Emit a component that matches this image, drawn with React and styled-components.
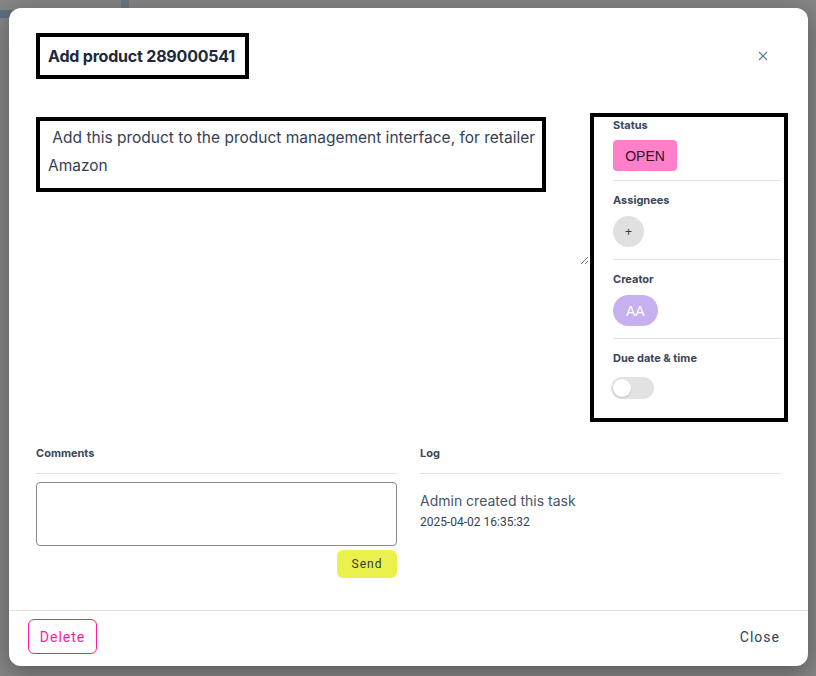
import styled, { createGlobalStyle } from 'styled-components'

const GlobalStyle = createGlobalStyle`
  * { box-sizing: border-box; }
  body {
    margin: 0;
    background: #858585;
    font-family: Inter, "Noto Sans", sans-serif;
  }
`

const Page = styled.div`
  position: relative;
  width: 816px;
  height: 676px;
  overflow: hidden;
`

const Underlay = styled.div`
  display: flex;
  align-items: flex-start;
`

const NavColumn = styled.div`
  width: 121px;
  padding-top: 10px;
`

const NavItem = styled.div`
  width: 20px;
  height: 8px;
  background: #5f6e80;
`

const NavEdge = styled.div`
  width: 8px;
  height: 10px;
  background: #6c7888;
`

const Modal = styled.div`
  position: absolute;
  left: 9px;
  top: 8px;
  width: 799px;
  height: 658px;
  background: #fff;
  border-radius: 12px;
  box-shadow: 0 6px 24px rgba(0, 0, 0, 0.35);
  display: flex;
  flex-direction: column;
`

const Body = styled.div`
  flex: 1;
  padding: 25px 27px 0 27px;
  display: flex;
  flex-direction: column;
`

const Header = styled.div`
  display: flex;
  align-items: center;
  justify-content: space-between;
  height: 46px;
`

const TitleBox = styled.h2`
  margin: 0;
  border: 4px solid #000;
  height: 46px;
  padding: 0 10px 0 8px;
  display: flex;
  align-items: center;
  font-size: 16px;
  font-weight: 700;
  color: #1e293b;
  letter-spacing: -0.2px;
`

const CloseX = styled.button`
  width: 30px;
  height: 30px;
  margin-right: 3px;
  border: none;
  background: none;
  padding: 0;
  display: flex;
  align-items: center;
  justify-content: center;
  color: #64748b;
`

const Main = styled.div`
  margin-top: 34px;
  display: flex;
  align-items: flex-start;
`

const DescArea = styled.div`
  flex: 1;
  height: 152px;
  padding-top: 4px;
  display: flex;
  flex-direction: column;
`

const DescBox = styled.div`
  width: 510px;
  height: 75px;
  border: 4px solid #000;
  padding: 3px 0 0 8px;
  font-size: 15.5px;
  line-height: 28px;
  color: #334155;
  white-space: pre-wrap;
`

const Grip = styled.svg`
  margin-top: auto;
  align-self: flex-end;
  margin-right: 1px;
`

const SidePanel = styled.div`
  width: 198px;
  height: 309px;
  margin-right: -7px;
  border: 4px solid #000;
  padding: 0 3px 0 19px;
`

const Section = styled.div`
  padding: ${p => (p.$first ? '0 0 9px' : '11px 0 12px')};
  border-bottom: ${p => (p.$last ? 'none' : '1px solid #e2e2e2')};
  display: flex;
  flex-direction: column;
  align-items: flex-start;
  gap: ${p => (p.$first ? '7px' : '8px')};
`

const Label = styled.div`
  font-size: 11px;
  line-height: 16px;
  font-weight: 700;
  color: #3b4658;
`

const StatusBadge = styled.div`
  width: 64px;
  height: 31px;
  border-radius: 4px;
  background: #ff80c8;
  color: #2b1326;
  font-family: "Liberation Sans", Arial, sans-serif;
  font-size: 14px;
  display: flex;
  align-items: center;
  justify-content: center;
`

const Avatar = styled.div`
  height: 31px;
  min-width: 31px;
  padding: ${p => (p.$wide ? '0 13px' : '0')};
  border-radius: 16px;
  background: ${p => p.$bg};
  color: ${p => p.$color};
  font-family: "Liberation Sans", Arial, sans-serif;
  font-size: ${p => (p.$wide ? '14px' : '12px')};
  display: flex;
  align-items: center;
  justify-content: center;
`

const Toggle = styled.div`
  width: 43px;
  height: 22px;
  margin-left: -2px;
  margin-top: 3px;
  border-radius: 11px;
  background: #e2e2e2;
  padding: 2px;
`

const Knob = styled.div`
  width: 18px;
  height: 18px;
  border-radius: 50%;
  background: #fff;
  box-shadow: 0 1px 2px rgba(0, 0, 0, 0.15);
`

const Bottom = styled.div`
  margin-top: 23px;
  display: grid;
  grid-template-columns: 1fr 1fr;
  gap: 23px;
`

const Column = styled.div`
  display: flex;
  flex-direction: column;
`

const ColHead = styled.div`
  padding-bottom: 12px;
  border-bottom: 1px solid #e2e2e2;
`

const CommentInput = styled.textarea`
  margin-top: 8px;
  height: 64px;
  border: 1px solid #8a8a8a;
  border-radius: 4px;
  resize: none;
  font-family: inherit;
`

const SendButton = styled.button`
  margin-top: 4px;
  align-self: flex-end;
  width: 60px;
  height: 28px;
  border: none;
  border-radius: 6px;
  background: #eaf04c;
  color: #2f3a3a;
  font-family: Roboto, sans-serif;
  font-size: 12px;
  letter-spacing: 1px;
`

const LogText = styled.div`
  margin-top: 18px;
  font-size: 14px;
  line-height: 18px;
  color: #475569;
`

const LogTime = styled.div`
  margin-top: 4px;
  font-family: Roboto, sans-serif;
  font-size: 12px;
  line-height: 16px;
  color: #334155;
`

const Footer = styled.div`
  border-top: 1px solid #e2e2e2;
  height: 56px;
  padding: 8px 28px 0 19px;
  display: flex;
  align-items: flex-start;
  justify-content: space-between;
`

const DeleteButton = styled.button`
  width: 69px;
  height: 35px;
  border: 1px solid #ff1a9e;
  border-radius: 6px;
  background: #fff;
  color: #ff1a9e;
  font-family: Roboto, sans-serif;
  font-size: 14px;
  letter-spacing: 1px;
`

const CloseButton = styled.button`
  height: 35px;
  border: none;
  background: none;
  padding: 0;
  color: #334155;
  font-family: Roboto, sans-serif;
  font-size: 14px;
  letter-spacing: 1px;
`

export default function App() {
  return (
    <>
      <GlobalStyle />
      <Page>
        <Underlay>
          <NavColumn>
            <NavItem />
          </NavColumn>
          <NavEdge />
        </Underlay>
        <Modal>
          <Body>
            <Header>
              <TitleBox>Add product 289000541</TitleBox>
              <CloseX aria-label="close">
                <svg width="10" height="10" viewBox="0 0 10 10">
                  <path d="M1 1 L9 9 M9 1 L1 9" stroke="currentColor" strokeWidth="1.2" />
                </svg>
              </CloseX>
            </Header>

            <Main>
              <DescArea>
                <DescBox>{' Add this product to the product management interface, for retailer\nAmazon'}</DescBox>
                <Grip width="9" height="9" viewBox="0 0 9 9">
                  <path d="M8 1 L1 8 M8 5 L5 8" stroke="#777" strokeWidth="1" />
                </Grip>
              </DescArea>

              <SidePanel>
                <Section $first>
                  <Label>Status</Label>
                  <StatusBadge>OPEN</StatusBadge>
                </Section>
                <Section>
                  <Label>Assignees</Label>
                  <Avatar $bg="#e0e0e0" $color="#333">+</Avatar>
                </Section>
                <Section>
                  <Label>Creator</Label>
                  <Avatar $wide $bg="#c6b0f0" $color="#fff">AA</Avatar>
                </Section>
                <Section $last>
                  <Label>Due date &amp; time</Label>
                  <Toggle>
                    <Knob />
                  </Toggle>
                </Section>
              </SidePanel>
            </Main>

            <Bottom>
              <Column>
                <ColHead>
                  <Label>Comments</Label>
                </ColHead>
                <CommentInput />
                <SendButton>Send</SendButton>
              </Column>
              <Column>
                <ColHead>
                  <Label>Log</Label>
                </ColHead>
                <LogText>Admin created this task</LogText>
                <LogTime>2025-04-02 16:35:32</LogTime>
              </Column>
            </Bottom>
          </Body>

          <Footer>
            <DeleteButton>Delete</DeleteButton>
            <CloseButton>Close</CloseButton>
          </Footer>
        </Modal>
      </Page>
    </>
  )
}
